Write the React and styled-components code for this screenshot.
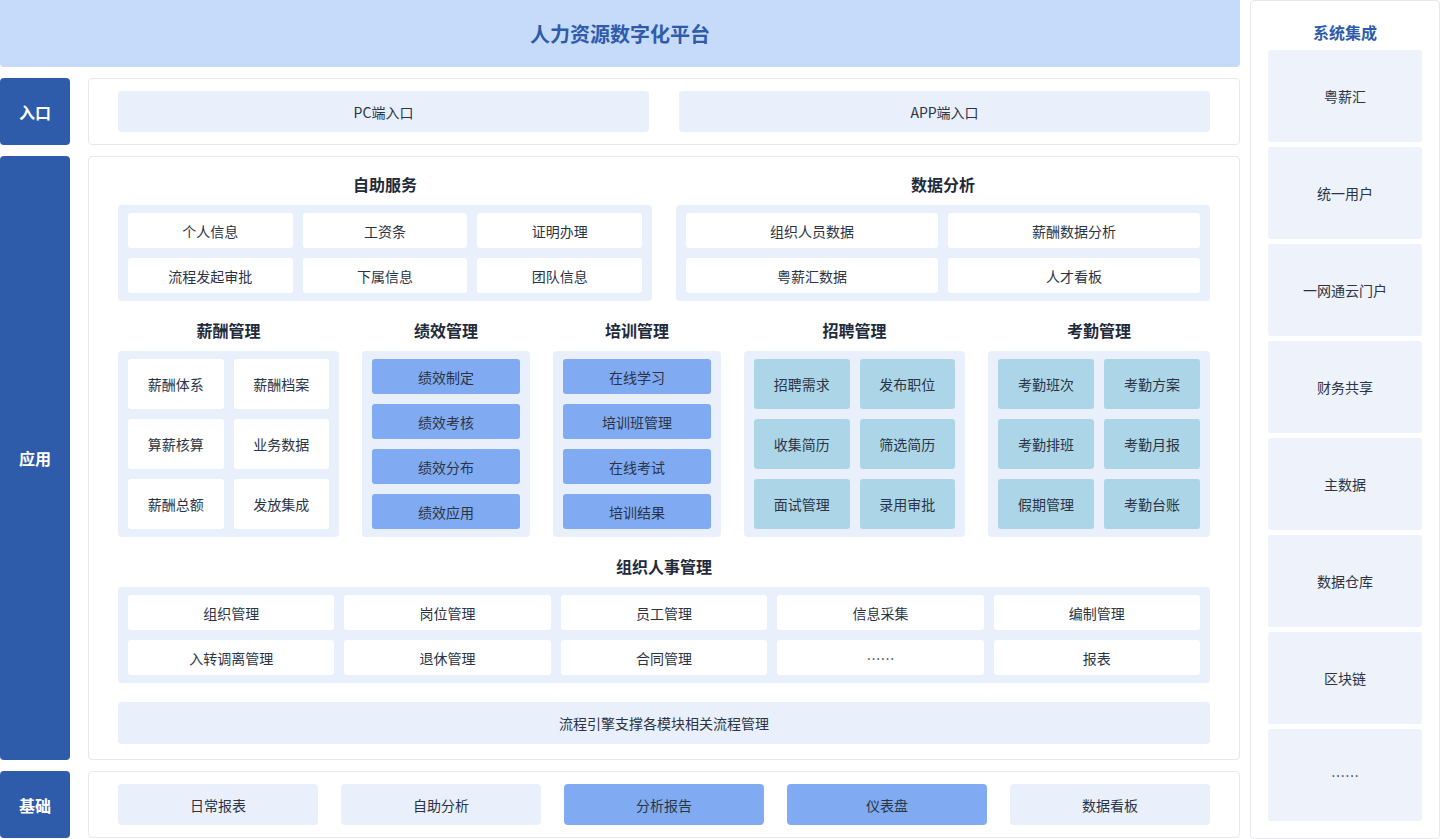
import React from "react";
import styled, { createGlobalStyle } from "styled-components";

const BLUE = "#2f5caa";
const LIGHT = "#e9f0fb";

const Global = createGlobalStyle`
  body { margin: 0; background: #fff; font-family: "Noto Sans CJK SC", "Noto Sans", sans-serif; color: #2b3445; }
`;

const Page = styled.div`
  display: grid;
  grid-template-columns: 1240px 190px;
  gap: 10px;
  width: 1440px;
  height: 839px;
`;

const Left = styled.div`
  display: grid;
  grid-template-rows: 67px 67px 604px 67px;
  row-gap: 11px;
`;

const Header = styled.div`
  background: #c6dafa;
  border-radius: 0 0 4px 4px;
  display: flex;
  align-items: center;
  justify-content: center;
  font-size: 20px;
  font-weight: 700;
  color: ${BLUE};
`;

const Row = styled.div`
  display: grid;
  grid-template-columns: 70px 1fr;
  column-gap: 18px;
`;

const Label = styled.div`
  background: ${BLUE};
  color: #fff;
  border-radius: 4px;
  display: flex;
  align-items: center;
  justify-content: center;
  font-size: 16px;
  font-weight: 700;
`;

const Panel = styled.div`
  border: 1px solid #e6e8ec;
  border-radius: 4px;
  padding: ${(p) => p.$pad || "12px 29px"};
  display: ${(p) => (p.$col ? "flex" : "grid")};
  flex-direction: column;
  grid-template-columns: ${(p) => p.$cols || "none"};
  gap: ${(p) => p.$gap || "30px"};
  align-items: stretch;
`;

const Cell = styled.div`
  background: ${(p) => p.$bg || LIGHT};
  border-radius: 4px;
  display: flex;
  align-items: center;
  justify-content: center;
  font-size: 14px;
  height: ${(p) => p.$h || "auto"};
`;

const TopRow = styled.div`
  display: grid;
  grid-template-columns: ${(p) => p.$cols};
  gap: ${(p) => p.$gap || "23px"};
`;

const Group = styled.div`
  display: flex;
  flex-direction: column;
`;

const Title = styled.div`
  text-align: center;
  font-size: 16px;
  font-weight: 700;
  color: #1f2a3a;
  height: 36px;
  line-height: 26px;
  padding-top: 2px;
  box-sizing: border-box;
`;

const Box = styled.div`
  background: ${LIGHT};
  border-radius: 4px;
  padding: 8px 10px;
  display: grid;
  grid-template-columns: repeat(${(p) => p.$n}, 1fr);
  grid-auto-rows: ${(p) => p.$rh || "35px"};
  gap: 10px;
`;

const Item = styled.div`
  background: ${(p) => p.$bg || "#fff"};
  border-radius: 3px;
  display: flex;
  align-items: center;
  justify-content: center;
  font-size: 14px;
  color: #2b3445;
`;

const Right = styled.div`
  border: 1px solid #e6e8ec;
  border-radius: 4px;
  padding: 0 17px 17px;
  display: flex;
  flex-direction: column;
  gap: 5px;
`;

const RTitle = styled.div`
  height: 44px;
  display: flex;
  align-items: center;
  justify-content: center;
  font-size: 16px;
  font-weight: 700;
  color: ${BLUE};
  padding-top: 18px;
  box-sizing: border-box;
`;

const RItem = styled.div`
  flex: 1;
  background: #edf2fb;
  border-radius: 3px;
  display: flex;
  align-items: center;
  justify-content: center;
  font-size: 14px;
`;

const MID = "#80abf2";
const TEAL = "#acd6e8";

const mk = (title, n, items, bg, rh) => ({ title, n, items, bg, rh });

const mids = [
  mk("薪酬管理", 2, ["薪酬体系", "薪酬档案", "算薪核算", "业务数据", "薪酬总额", "发放集成"], "#fff", "50px"),
  mk("绩效管理", 1, ["绩效制定", "绩效考核", "绩效分布", "绩效应用"], MID, "35px"),
  mk("培训管理", 1, ["在线学习", "培训班管理", "在线考试", "培训结果"], MID, "35px"),
  mk("招聘管理", 2, ["招聘需求", "发布职位", "收集简历", "筛选简历", "面试管理", "录用审批"], TEAL, "50px"),
  mk("考勤管理", 2, ["考勤班次", "考勤方案", "考勤排班", "考勤月报", "假期管理", "考勤台账"], TEAL, "50px"),
];

export default function App() {
  return (
    <>
      <Global />
      <Page>
        <Left>
          <Header>人力资源数字化平台</Header>
          <Row>
            <Label>入口</Label>
            <Panel $cols="1fr 1fr">
              <Cell>PC端入口</Cell>
              <Cell>APP端入口</Cell>
            </Panel>
          </Row>
          <Row>
            <Label>应用</Label>
            <Panel $col $pad="12px 29px 13px" $gap="14px">
              <TopRow $cols="534px 534px" $gap="24px">
                <Group>
                  <Title>自助服务</Title>
                  <Box $n={3}>
                    {["个人信息", "工资条", "证明办理", "流程发起审批", "下属信息", "团队信息"].map((t) => (
                      <Item key={t}>{t}</Item>
                    ))}
                  </Box>
                </Group>
                <Group>
                  <Title>数据分析</Title>
                  <Box $n={2}>
                    {["组织人员数据", "薪酬数据分析", "粤薪汇数据", "人才看板"].map((t) => (
                      <Item key={t}>{t}</Item>
                    ))}
                  </Box>
                </Group>
              </TopRow>
              <TopRow $cols="221px 168px 168px 221px 222px" $gap="23px">
                {mids.map((g) => (
                  <Group key={g.title}>
                    <Title>{g.title}</Title>
                    <Box $n={g.n} $rh={g.rh}>
                      {g.items.map((t) => (
                        <Item key={t} $bg={g.bg}>{t}</Item>
                      ))}
                    </Box>
                  </Group>
                ))}
              </TopRow>
              <Group>
                <Title>组织人事管理</Title>
                <Box $n={5}>
                  {["组织管理", "岗位管理", "员工管理", "信息采集", "编制管理", "入转调离管理", "退休管理", "合同管理", "……", "报表"].map((t) => (
                    <Item key={t}>{t}</Item>
                  ))}
                </Box>
              </Group>
              <Cell $h="42px" style={{ marginTop: 5 }}>流程引擎支撑各模块相关流程管理</Cell>
            </Panel>
          </Row>
          <Row>
            <Label>基础</Label>
            <Panel $cols="repeat(5, 1fr)" $gap="23px">
              <Cell>日常报表</Cell>
              <Cell>自助分析</Cell>
              <Cell $bg={MID}>分析报告</Cell>
              <Cell $bg={MID}>仪表盘</Cell>
              <Cell>数据看板</Cell>
            </Panel>
          </Row>
        </Left>
        <Right>
          <RTitle>系统集成</RTitle>
          {["粤薪汇", "统一用户", "一网通云门户", "财务共享", "主数据", "数据仓库", "区块链", "……"].map((t) => (
            <RItem key={t}>{t}</RItem>
          ))}
        </Right>
      </Page>
    </>
  );
}
